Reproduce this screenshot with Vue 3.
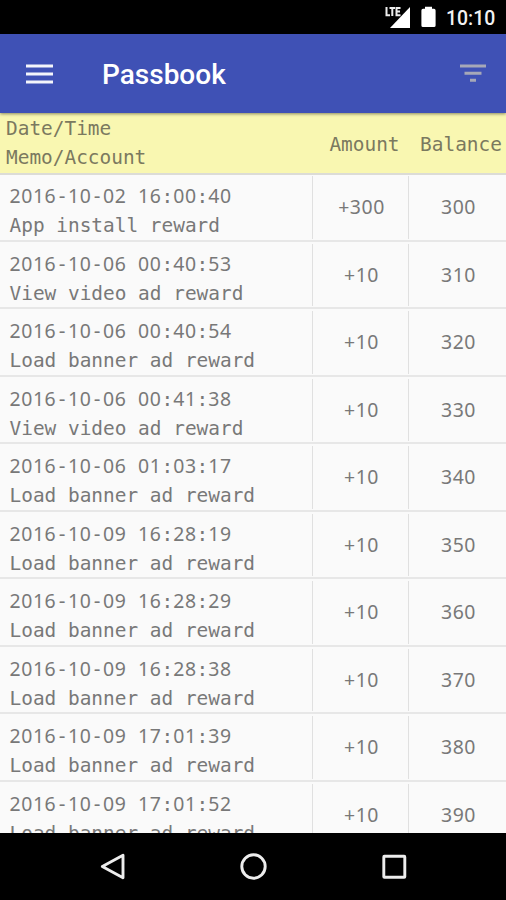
<script setup>
const entries = [
  ['2016-10-02 16:00:40', 'App install reward', '+300', '300'],
  ['2016-10-06 00:40:53', 'View video ad reward', '+10', '310'],
  ['2016-10-06 00:40:54', 'Load banner ad reward', '+10', '320'],
  ['2016-10-06 00:41:38', 'View video ad reward', '+10', '330'],
  ['2016-10-06 01:03:17', 'Load banner ad reward', '+10', '340'],
  ['2016-10-09 16:28:19', 'Load banner ad reward', '+10', '350'],
  ['2016-10-09 16:28:29', 'Load banner ad reward', '+10', '360'],
  ['2016-10-09 16:28:38', 'Load banner ad reward', '+10', '370'],
  ['2016-10-09 17:01:39', 'Load banner ad reward', '+10', '380'],
  ['2016-10-09 17:01:52', 'Load banner ad reward', '+10', '390'],
].map(([date, memo, amount, balance]) => ({ date, memo, amount, balance }))

// Separators get a full character cell so that the digits line up in columns.
const parts = (date) => date.split(/([-: ])/)
</script>

<template>
  <div class="screen">
    <div class="status">
      <svg class="signal" width="28" height="26" viewBox="0 0 28 26">
        <path d="M25 2V23H5Z" fill="#fff" />
        <path d="M0 1H16V9L12.500 13H0Z" fill="#000" />
        <path d="M1.500 2V10.300H5M4.500 3H10M7.300 3V11M15.500 3H11.500V10.300H15.500M11.500 6.600H15" fill="none" stroke="#ededed" stroke-width="2" />
      </svg>
      <svg class="battery" width="15" height="22" viewBox="0 0 15 22">
        <path d="M4 0.800h7v2H13q1.600 0 1.600 1.600V19.500q0 1.600-1.600 1.600H2Q.4 21.100 .4 19.500V4.400Q.4 2.800 2 2.800H4Z" fill="#fff" />
      </svg>
      <span class="clock">10:10</span>
    </div>
    <header class="bar">
      <svg class="menu" width="27" height="20" viewBox="0 0 27 20">
        <path d="M0 1.900H27M0 10H27M0 18H27" stroke="#f4f5fb" stroke-width="3" />
      </svg>
      <h1>Passbook</h1>
      <svg class="filter" width="26" height="19" viewBox="0 0 26 19">
        <path d="M0 2H26M4.500 9.200H21.500M10 16.200H16" stroke="#a6a8b8" stroke-width="3" />
      </svg>
    </header>
    <div class="heading">
      <div class="what"><div>Date/Time</div><div>Memo/Account</div></div>
      <div class="amount">Amount</div>
      <div class="balance">Balance</div>
    </div>
    <main class="list">
      <div v-for="e in entries" :key="e.date" class="row">
        <div class="what">
          <div class="date"><span v-for="(p, i) in parts(e.date)" :key="i" :class="{ sep: i % 2 }">{{ p }}</span></div>
          <div class="memo">{{ e.memo }}</div>
        </div>
        <div class="amount">{{ e.amount }}</div>
        <div class="balance">{{ e.balance }}</div>
      </div>
    </main>
    <nav class="nav">
      <svg width="28" height="28" viewBox="0 0 28 28"><path d="M24 2.200V24.800L3.300 13.500Z" /></svg>
      <svg width="28" height="28" viewBox="0 0 28 28"><circle cx="13.500" cy="13.500" r="11.700" /></svg>
      <svg width="28" height="28" viewBox="0 0 28 28"><rect x="3.800" y="3.300" width="21" height="21" rx="0.600" /></svg>
    </nav>
  </div>
</template>

<style>
body { background: #000; overflow: hidden; }
</style>

<style scoped>
.screen {
  display: flex;
  flex-direction: column;
  width: 506px;
  height: 900px;
  overflow: hidden;
  background: #fafafa;
  color: #787878;
  font: 19.43px/29px "DejaVu Sans Mono", monospace;
}
.status {
  display: flex;
  flex: none;
  height: 34px;
  background: #000;
  color: #f2f2f2;
}
.signal { margin: 5px 0 0 385px; }
.battery { margin: 6px 0 0 8px; }
.clock {
  margin-left: 10px;
  font: 500 19.4px/37px Roboto, sans-serif;
  white-space: nowrap;
}
.bar {
  display: flex;
  flex: none;
  align-items: center;
  height: 79px;
  padding: 0 20px 0 26px;
  background: #3f51b5;
  position: relative;
  box-shadow: 0 1px 3px rgba(0, 0, 0, 0.45);
}
h1 {
  flex: 1;
  margin: 3px 0 0 49px;
  color: #fff;
  font: 500 28px/36px Roboto, sans-serif;
}
.heading, .row {
  display: grid;
  grid-template-columns: 312px 96px 98px;
}
.heading {
  flex: none;
  height: 62px;
  border-bottom: 2px solid #dcdcd6;
  box-sizing: border-box;
  background: #f9f7b1;
  color: #7b795f;
}
.heading .what { padding: 1px 0 0 6px; }
.heading .amount, .heading .balance {
  line-height: 64px;
  height: 60px;
  text-align: center;
  white-space: nowrap;
}
.heading .amount { padding-left: 9px; }
.heading .balance { padding-left: 8px; }
.list {
  flex: 1;
  min-height: 0;
  overflow: hidden;
}
.row {
  height: 67.5px;
  padding: 2px 0;
  border-bottom: 2px solid #e7e7e7;
  box-sizing: border-box;
}
.row:first-child { height: 66.5px; padding-top: 1px; }
.row .what { padding: 4px 0 0 9.5px; height: 58px; white-space: nowrap; }
.row .amount, .row .balance {
  border-left: 1.5px solid #e0e0e0;
  padding-left: 2px;
  font-family: "Noto Sans", sans-serif;
  letter-spacing: 0.55px;
  line-height: 62px;
  height: 62.5px;
  text-align: center;
}
.date {
  height: 29px;
  line-height: 31px;
  font-family: "Noto Sans", sans-serif;
  letter-spacing: 0.58px;
  white-space: pre;
}
.memo { line-height: 34px; }
.sep {
  display: inline-block;
  width: 11.7px;
  font-family: "DejaVu Sans Mono", monospace;
  letter-spacing: 0;
  line-height: 20px;
  text-align: center;
}
.nav {
  display: flex;
  flex: none;
  justify-content: space-between;
  height: 67px;
  padding: 20px 98px 0 99px;
  box-sizing: border-box;
  background: #000;
}
.nav svg {
  fill: none;
  stroke: #ededed;
  stroke-width: 2.9;
  stroke-linejoin: round;
}
</style>
